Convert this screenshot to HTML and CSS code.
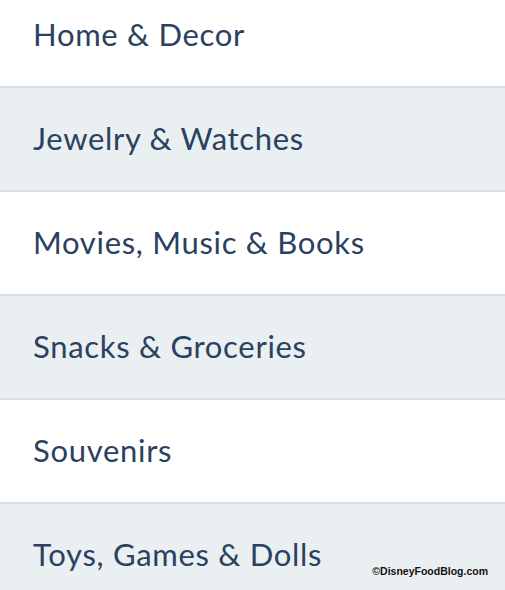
FILE: index.html
```html
<!DOCTYPE html>
<html>
  <head>
    <meta charset="UTF-8">
    <title>Shop Categories</title>
    <link rel="stylesheet" href="styles.css">
  </head>
  <body>
    <div id="page">
      <!-- Category list -->
      <ul id="categories">
        <li class="row">Home &amp; Decor</li>
        <li class="row alt">Jewelry &amp; Watches</li>
        <li class="row">Movies, Music &amp; Books</li>
        <li class="row alt">Snacks &amp; Groceries</li>
        <li class="row">Souvenirs</li>
        <li class="row alt">Toys, Games &amp; Dolls</li>
      </ul>

      <!-- Watermark -->
      <div id="watermark">©DisneyFoodBlog.com</div>
    </div>
  </body>
</html>
```

FILE: styles.css
```css
/* Reset */
* {
  box-sizing: border-box;
  margin: 0;
  padding: 0;
}

html, body {
  width: 100%;
  height: 100%;
  background-color: #ffffff;
  overflow: hidden;
}

#page {
  position: relative;
  display: flow-root; /* keep the list margin inside */
  width: 100%;
  height: 100%;
}

/* List of categories */
#categories {
  list-style: none;
  margin-top: -16px; /* first row is cut off at the top */
}

.row {
  display: flex;
  align-items: center;
  height: 104px;
  padding: 0 33px 3px;
  border-bottom: 2px solid #dadfe2;
  background-color: #ffffff;
  color: #2a4160;
  font-family: Lato, "Noto Sans", sans-serif;
  font-size: 31px;
  letter-spacing: 0.7px;
}

.row.alt {
  background-color: #eaeff2;
}

/* Watermark in the corner */
#watermark {
  position: absolute;
  right: 17px;
  bottom: 13px;
  color: #111111;
  font-family: "Liberation Sans", Arial, sans-serif;
  font-weight: bold;
  font-size: 10.5px;
}
```
